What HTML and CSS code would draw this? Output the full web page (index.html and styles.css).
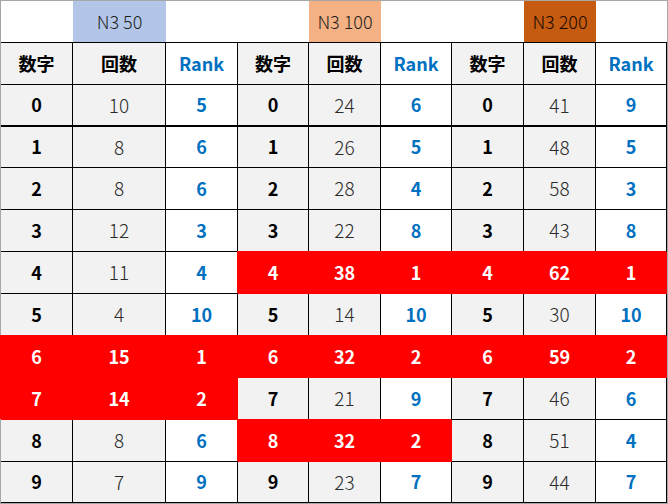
FILE: index.html
```html
<!DOCTYPE html>
<html lang="ja">
<head>
<meta charset="utf-8">
<title>N3 集計</title>
<link rel="stylesheet" href="styles.css">
</head>
<body>
<div class="sheet">
  <div class="c top"></div><div class="c top n50">N3 50</div><div class="c top"></div>
  <div class="c top"></div><div class="c top n100">N3 100</div><div class="c top"></div>
  <div class="c top"></div><div class="c top n200">N3 200</div><div class="c top"></div>

  <div class="c num">数字</div><div class="c num">回数</div><div class="c rank">Rank</div>
  <div class="c num">数字</div><div class="c num">回数</div><div class="c rank">Rank</div>
  <div class="c num">数字</div><div class="c num">回数</div><div class="c rank">Rank</div>

  <div class="c num thick">0</div><div class="c cnt thick">10</div><div class="c rank thick">5</div>
  <div class="c num thick">0</div><div class="c cnt thick">24</div><div class="c rank thick">6</div>
  <div class="c num thick">0</div><div class="c cnt thick">41</div><div class="c rank thick">9</div>

  <div class="c num">1</div><div class="c cnt">8</div><div class="c rank">6</div>
  <div class="c num">1</div><div class="c cnt">26</div><div class="c rank">5</div>
  <div class="c num">1</div><div class="c cnt">48</div><div class="c rank">5</div>

  <div class="c num">2</div><div class="c cnt">8</div><div class="c rank">6</div>
  <div class="c num">2</div><div class="c cnt">28</div><div class="c rank">4</div>
  <div class="c num">2</div><div class="c cnt">58</div><div class="c rank">3</div>

  <div class="c num">3</div><div class="c cnt">12</div><div class="c rank">3</div>
  <div class="c num">3</div><div class="c cnt">22</div><div class="c rank">8</div>
  <div class="c num">3</div><div class="c cnt">43</div><div class="c rank">8</div>

  <div class="c num">4</div><div class="c cnt">11</div><div class="c rank">4</div>
  <div class="c num hot">4</div><div class="c cnt hot">38</div><div class="c rank hot">1</div>
  <div class="c num hot">4</div><div class="c cnt hot">62</div><div class="c rank hot">1</div>

  <div class="c num">5</div><div class="c cnt">4</div><div class="c rank">10</div>
  <div class="c num">5</div><div class="c cnt">14</div><div class="c rank">10</div>
  <div class="c num">5</div><div class="c cnt">30</div><div class="c rank">10</div>

  <div class="c num hot">6</div><div class="c cnt hot">15</div><div class="c rank hot">1</div>
  <div class="c num hot">6</div><div class="c cnt hot">32</div><div class="c rank hot">2</div>
  <div class="c num hot">6</div><div class="c cnt hot">59</div><div class="c rank hot">2</div>

  <div class="c num hot">7</div><div class="c cnt hot">14</div><div class="c rank hot">2</div>
  <div class="c num">7</div><div class="c cnt">21</div><div class="c rank">9</div>
  <div class="c num">7</div><div class="c cnt">46</div><div class="c rank">6</div>

  <div class="c num">8</div><div class="c cnt">8</div><div class="c rank">6</div>
  <div class="c num hot">8</div><div class="c cnt hot">32</div><div class="c rank hot">2</div>
  <div class="c num">8</div><div class="c cnt">51</div><div class="c rank">4</div>

  <div class="c num">9</div><div class="c cnt">7</div><div class="c rank">9</div>
  <div class="c num">9</div><div class="c cnt">23</div><div class="c rank">7</div>
  <div class="c num">9</div><div class="c cnt">44</div><div class="c rank">7</div>
</div>
</body>
</html>
```

FILE: styles.css
```css
html, body {
  margin: 0;
  padding: 0;
  background: #ffffff;
}

.sheet {
  box-sizing: border-box;
  width: 668px;
  height: 504px;
  border: 1px solid #a6a6a6;
  display: grid;
  grid-template-columns: 72px 93px 72px 71px 72px 71px 72px 72px 71px;
  grid-template-rows: 42px 42px 42px 41px repeat(7, 42px) 41px;
  font-family: "Noto Sans CJK JP", "Noto Sans", sans-serif;
  font-size: 18px;
  line-height: 1;
}

.c {
  box-sizing: border-box;
  border-right: 1px solid #000;
  border-bottom: 1px solid #000;
  display: flex;
  align-items: center;
  justify-content: center;
  padding-bottom: 2px;
}

.top {
  border-right: none;
  background: #ffffff;
  font-weight: 300;
  color: #1e1e1e;
  font-size: 18px;
}

.n50 { background: #b4c6e7; }
.n100 { background: #f4b183; }
.n200 { background: #c55a11; color: #1a0a00; }

.num {
  background: #f2f2f2;
  color: #000;
  font-weight: 700;
}

.cnt {
  background: #f2f2f2;
  color: #2b2b2b;
  font-weight: 300;
  font-size: 19px;
}

.rank {
  background: #ffffff;
  color: #0070c0;
  font-weight: 700;
}

.thick {
  border-bottom-width: 2px;
}

.c.hot {
  background: #ff0000;
  color: #ffffff;
  font-weight: 700;
  font-size: 18px;
  border-color: #ff0000;
  box-shadow: -1px -1px 0 0 #ff0000;
}
```
